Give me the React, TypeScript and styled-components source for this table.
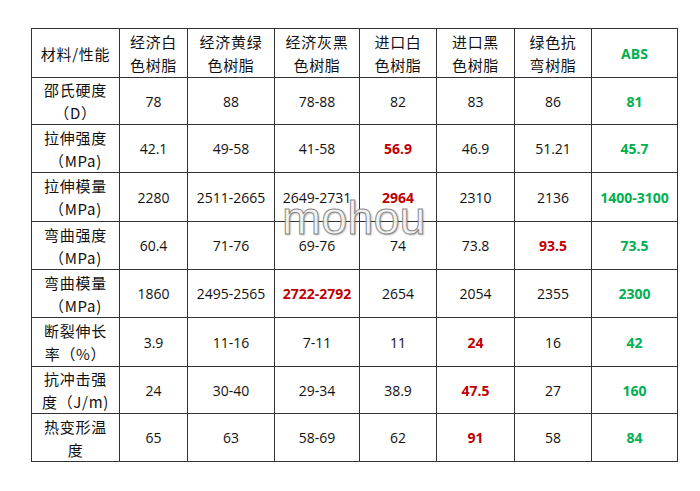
import React from "react";
import styled, { createGlobalStyle } from "styled-components";

const GlobalStyle = createGlobalStyle`
  html, body {
    margin: 0;
    padding: 0;
    background: #ffffff;
  }
`;

const Page = styled.div`
  position: relative;
  width: 700px;
  height: 491px;
  padding: 28px 0 0 31px;
  box-sizing: border-box;
  font-family: "Open Sans", "Noto Sans CJK SC", sans-serif;
`;

const Table = styled.table`
  border-collapse: collapse;
  table-layout: fixed;
  width: 647px;
  color: #111;
`;

const Cell = styled.td<{ $tone?: "red" | "green"; $cjk?: boolean; $h?: number }>`
  border: 1.5px solid #333;
  height: ${(p) => p.$h ?? 47}px;
  padding: 0;
  text-align: center;
  vertical-align: middle;
  font-family: ${(p) =>
    p.$cjk ? '"Noto Sans CJK SC", sans-serif' : '"Open Sans", "Noto Sans CJK SC", sans-serif'};
  font-size: ${(p) => (p.$cjk ? 15 : 14)}px;
  line-height: 23px;
  font-weight: ${(p) => (p.$tone ? 700 : 400)};
  color: ${(p) => (p.$tone === "red" ? "#c00000" : p.$tone === "green" ? "#00b050" : "#111")};
  letter-spacing: ${(p) => (p.$cjk ? "0.7px" : "0")};
`;

const Watermark = styled.div`
  position: absolute;
  left: 282px;
  top: 190px;
  font-family: "Liberation Sans", sans-serif;
  font-size: 47px;
  color: rgba(255, 255, 255, 0.85);
  -webkit-text-stroke: 1px #8a8a8a;
  text-shadow: 1px 1px 2px rgba(0, 0, 0, 0.35);
  pointer-events: none;
`;

const widths = [88, 68, 87, 85, 77, 78, 77, 86];

const headers = [
  ["材料/性能"],
  ["经济白", "色树脂"],
  ["经济黄绿", "色树脂"],
  ["经济灰黑", "色树脂"],
  ["进口白", "色树脂"],
  ["进口黑", "色树脂"],
  ["绿色抗", "弯树脂"],
];

type Val = [string, ("red" | "green")?];

const rows: { label: string[]; values: Val[] }[] = [
  { label: ["邵氏硬度", "（D）"], values: [["78"], ["88"], ["78-88"], ["82"], ["83"], ["86"], ["81", "green"]] },
  { label: ["拉伸强度", "（MPa)"], values: [["42.1"], ["49-58"], ["41-58"], ["56.9", "red"], ["46.9"], ["51.21"], ["45.7", "green"]] },
  { label: ["拉伸模量", "（MPa)"], values: [["2280"], ["2511-2665"], ["2649-2731"], ["2964", "red"], ["2310"], ["2136"], ["1400-3100", "green"]] },
  { label: ["弯曲强度", "（MPa)"], values: [["60.4"], ["71-76"], ["69-76"], ["74"], ["73.8"], ["93.5", "red"], ["73.5", "green"]] },
  { label: ["弯曲模量", "（MPa)"], values: [["1860"], ["2495-2565"], ["2722-2792", "red"], ["2654"], ["2054"], ["2355"], ["2300", "green"]] },
  { label: ["断裂伸长", "率（%）"], values: [["3.9"], ["11-16"], ["7-11"], ["11"], ["24", "red"], ["16"], ["42", "green"]] },
  { label: ["抗冲击强", "度（J/m)"], values: [["24"], ["30-40"], ["29-34"], ["38.9"], ["47.5", "red"], ["27"], ["160", "green"]] },
  { label: ["热变形温", "度"], values: [["65"], ["63"], ["58-69"], ["62"], ["91", "red"], ["58"], ["84", "green"]] },
];

const heights = [46, 47, 48, 47, 47, 48, 46, 47];

const Lines = ({ lines }: { lines: string[] }) => (
  <>
    {lines.map((l, i) => (
      <React.Fragment key={i}>
        {i > 0 && <br />}
        {l}
      </React.Fragment>
    ))}
  </>
);

const App = () => {
  return (
    <>
      <GlobalStyle />
      <Page>
        <Table>
          <colgroup>
            {widths.map((w, i) => (
              <col key={i} style={{ width: w }} />
            ))}
          </colgroup>
          <tbody>
            <tr>
              {headers.map((h, i) => (
                <Cell key={i} $cjk $h={48}>
                  <Lines lines={h} />
                </Cell>
              ))}
              <Cell $tone="green" $h={48}>ABS</Cell>
            </tr>
            {rows.map((r, i) => (
              <tr key={i}>
                <Cell $cjk $h={heights[i]}>
                  <Lines lines={r.label} />
                </Cell>
                {r.values.map(([v, tone], j) => (
                  <Cell key={j} $tone={tone} $h={heights[i]}>
                    {v}
                  </Cell>
                ))}
              </tr>
            ))}
          </tbody>
        </Table>
        <Watermark>mohou</Watermark>
      </Page>
    </>
  );
};

export default App;
